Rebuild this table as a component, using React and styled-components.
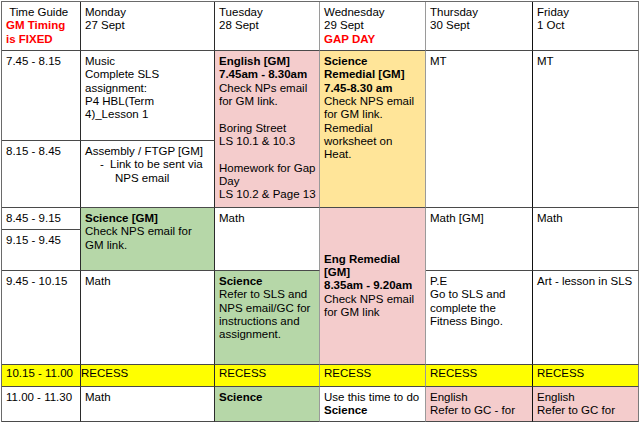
import React from 'react'
import styled, { createGlobalStyle } from 'styled-components'

const GlobalStyle = createGlobalStyle`
    html, body {
        margin: 0;
        padding: 0;
        background: #fff;
    }
    body {
        font-family: "Liberation Sans", Arial, sans-serif;
    }
`

// colour of the vertical rule on the right of each column
const edge = ['#2b2b2b', '#2b2b2b', '#9a9a9a', '#9a9a9a', '#111', '#7a7a7a']

const Sheet = styled.div`
    display: grid;
    grid-template-columns: 79px 134px 105px 106px 107px 106px;
    grid-template-rows: 49px 90px 67px 22px 41px 94px 22px 35px;
    width: max-content;
    margin: 1px 0 0 1px;
    border-top: 1px solid #6a6a6a;
    border-left: 1px solid #6a6a6a;
    color: #000;
    font-size: 11.5px;
    line-height: 13.33px;
`

const Cell = styled.div`
    grid-column: ${({ $col }) => $col};
    grid-row: ${({ $row }) => $row} / span ${({ $rows }) => $rows || 1};
    display: flex;
    flex-direction: column;
    justify-content: ${({ $middle }) => ($middle ? 'center' : 'flex-start')};
    padding: ${({ $top }) => ($top !== undefined ? $top : 4)}px 4px 4px
        ${({ $left }) => ($left !== undefined ? $left : 4)}px;
    background: ${({ $bg }) => $bg || '#fff'};
    border-right: 1px solid ${({ $col }) => edge[$col - 1]};
    border-bottom: 1px solid #4a4a4a;
    white-space: nowrap;
    min-width: 0;
    min-height: 0;
`

const B = styled.b`
    font-weight: bold;
`

const Alert = styled.span`
    color: #ff0000;
    font-weight: bold;
`

const Bullet = styled.div`
    padding-left: 30px;
    text-indent: -15px;
`

const Dash = styled.span`
    display: inline-block;
    width: 10px;
    text-indent: 0;
`

const pink = '#f4cccc'
const green = '#b6d7a8'
const sand = '#ffe599'
const recess = '#ffff00'

const days = [
    ['Monday', '27 Sept'],
    ['Tuesday', '28 Sept'],
    ['Wednesday', '29 Sept'],
    ['Thursday', '30 Sept'],
    ['Friday', '1 Oct'],
]

const times = [
    ['7.45 - 8.15', 2],
    ['8.15 - 8.45', 3],
    ['8.45 - 9.15', 4],
    ['9.15 - 9.45', 5],
    ['9.45 - 10.15', 6],
    ['11.00 - 11.30', 8],
]

const Timetable = () => (
    <Sheet>
        <Cell $col={1} $row={1}>
            <div>&nbsp;Time Guide</div>
            <Alert>
                GM Timing
                <br />
                is FIXED
            </Alert>
        </Cell>
        {days.map(([day, date], i) => (
            <Cell key={day} $col={i + 2} $row={1}>
                <div>{day}</div>
                <div>{date}</div>
                {day === 'Wednesday' && <Alert>GAP DAY</Alert>}
            </Cell>
        ))}

        {times.map(([t, row]) => (
            <Cell key={t} $col={1} $row={row}>
                {t}
            </Cell>
        ))}

        {/* Monday */}
        <Cell $col={2} $row={2}>
            Music
            <br />
            Complete SLS
            <br />
            assignment:
            <br />
            P4 HBL(Term
            <br />
            4)_Lesson 1
        </Cell>
        <Cell $col={2} $row={3}>
            <div>Assembly / FTGP [GM]</div>
            <Bullet>
                <Dash>-</Dash>Link to be sent via
                <br />
                NPS email
            </Bullet>
        </Cell>
        <Cell $col={2} $row={4} $rows={2} $bg={green}>
            <B>Science [GM]</B>
            <div>
                Check NPS email for
                <br />
                GM link.
            </div>
        </Cell>
        <Cell $col={2} $row={6}>
            Math
        </Cell>
        <Cell $col={2} $row={8}>
            Math
        </Cell>

        {/* Tuesday */}
        <Cell $col={3} $row={2} $rows={2} $bg={pink}>
            <B>
                English [GM]
                <br />
                7.45am - 8.30am
            </B>
            <div>
                Check NPs email
                <br />
                for GM link.
                <br />
                <br />
                Boring Street
                <br />
                LS 10.1 &amp; 10.3
                <br />
                <br />
                Homework for Gap
                <br />
                Day
                <br />
                LS 10.2 &amp; Page 13
            </div>
        </Cell>
        <Cell $col={3} $row={4} $rows={2}>
            Math
        </Cell>
        <Cell $col={3} $row={6} $bg={green}>
            <B>Science</B>
            <div>
                Refer to SLS and
                <br />
                NPS email/GC for
                <br />
                instructions and
                <br />
                assignment.
            </div>
        </Cell>
        <Cell $col={3} $row={8} $bg={green}>
            <B>Science</B>
        </Cell>

        {/* Wednesday */}
        <Cell $col={4} $row={2} $rows={2} $bg={sand}>
            <B>
                Science
                <br />
                Remedial [GM]
                <br />
                7.45-8.30 am
            </B>
            <div>
                Check NPS email
                <br />
                for GM link.
                <br />
                Remedial
                <br />
                worksheet on
                <br />
                Heat.
            </div>
        </Cell>
        <Cell $col={4} $row={4} $rows={3} $bg={pink} $middle>
            <B>
                Eng Remedial
                <br />
                [GM]
                <br />
                8.35am - 9.20am
            </B>
            <div>
                Check NPS email
                <br />
                for GM link
            </div>
        </Cell>
        <Cell $col={4} $row={8}>
            Use this time to do
            <B>Science</B>
        </Cell>

        {/* Thursday */}
        <Cell $col={5} $row={2} $rows={2}>
            MT
        </Cell>
        <Cell $col={5} $row={4} $rows={2}>
            Math [GM]
        </Cell>
        <Cell $col={5} $row={6}>
            P.E
            <br />
            Go to SLS and
            <br />
            complete the
            <br />
            Fitness Bingo.
        </Cell>
        <Cell $col={5} $row={8} $bg={pink}>
            English
            <br />
            Refer to GC - for
        </Cell>

        {/* Friday */}
        <Cell $col={6} $row={2} $rows={2}>
            MT
        </Cell>
        <Cell $col={6} $row={4} $rows={2}>
            Math
        </Cell>
        <Cell $col={6} $row={6}>
            Art - lesson in SLS
        </Cell>
        <Cell $col={6} $row={8} $bg={pink}>
            English
            <br />
            Refer to GC for
        </Cell>

        {/* Recess */}
        <Cell $col={1} $row={7} $bg={recess} $top={2}>
            10.15 - 11.00
        </Cell>
        {[2, 3, 4, 5, 6].map(col => (
            <Cell
                key={col}
                $col={col}
                $row={7}
                $bg={recess}
                $top={2}
                $left={col === 2 ? 0 : 4}
            >
                RECESS
            </Cell>
        ))}
    </Sheet>
)

const App = () => (
    <>
        <GlobalStyle />
        <Timetable />
    </>
)

export default App
